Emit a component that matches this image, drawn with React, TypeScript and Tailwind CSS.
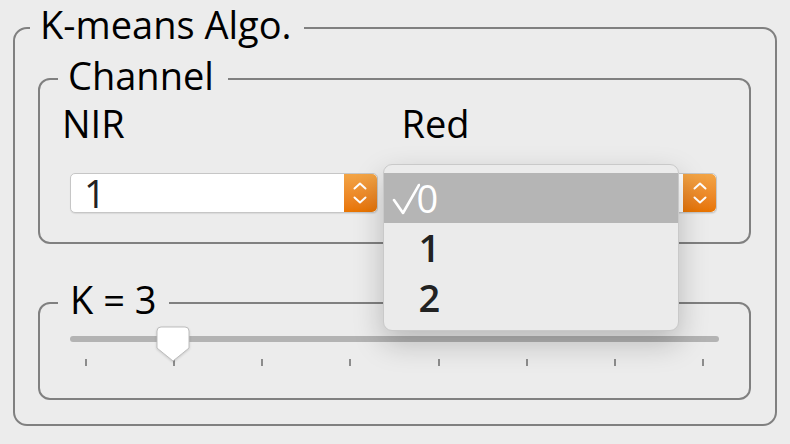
import type { ReactNode } from 'react';

const TICKS = [2, 3, 4, 5, 6, 7, 8, 9];

function Stepper() {
  return (
    <div className="flex h-full w-[33px] shrink-0 flex-col items-center justify-center gap-[6px] rounded-r-[5px] bg-gradient-to-b from-[#f2a445] to-[#e87400]">
      <svg width="14" height="8" viewBox="0 0 14 8">
        <path d="M1.5 6.5 L7 1.5 L12.5 6.5" fill="none" stroke="white" strokeWidth="2" strokeLinecap="round" strokeLinejoin="round" />
      </svg>
      <svg width="14" height="8" viewBox="0 0 14 8">
        <path d="M1.5 1.5 L7 6.5 L12.5 1.5" fill="none" stroke="white" strokeWidth="2" strokeLinecap="round" strokeLinejoin="round" />
      </svg>
    </div>
  );
}

function Select({ value, children }: { value?: string; children?: ReactNode }) {
  return (
    <div className="relative ml-[8px] mt-[31px] flex h-10 items-stretch rounded-[5px] border border-[#c6c6c6] bg-white shadow-[0_1px_1px_rgba(0,0,0,0.08)]">
      <div className="flex flex-1 items-center pl-[13px] text-[38px] leading-[38px] text-[#222]">{value}</div>
      <Stepper />
      {children}
    </div>
  );
}

function PopupMenu() {
  return (
    <div className="absolute left-[-28px] top-[-10px] z-10 flex h-[167px] w-[296px] flex-col rounded-[9px] border border-[#c9c9c9] bg-[#ebebeb] pt-[8px] shadow-[0_12px_30px_rgba(0,0,0,0.22)]">
      <div className="flex h-[50px] items-center bg-[#b5b5b5] pl-[8px] text-white">
        <svg width="28" height="34" viewBox="0 0 28 34" className="mt-[2px]">
          <path d="M2 18 L11 31 L27 3" fill="none" stroke="white" strokeWidth="2.6" strokeLinecap="round" strokeLinejoin="round" />
        </svg>
        <span className="ml-[-3px] text-[38px] leading-[38px]">0</span>
      </div>
      <div className="flex h-[50px] items-center pb-[3px] pl-[35px] text-[38px] font-semibold leading-[38px] text-[#222]">1</div>
      <div className="flex h-[50px] items-center pb-[3px] pl-[35px] text-[38px] font-semibold leading-[38px] text-[#222]">2</div>
    </div>
  );
}

function Thumb() {
  return (
    <svg width="34" height="37" viewBox="0 0 34 37" className="absolute left-[86px] top-[-1px] drop-shadow-[0_1px_1px_rgba(0,0,0,0.15)]">
      <path d="M5 1 H29 Q33 1 33 5 V22 L17 35 L1 22 V5 Q1 1 5 1 Z" fill="white" stroke="#bdbdbd" strokeWidth="1" />
    </svg>
  );
}

export default function App() {
  return (
    <div
      className="h-[444px] w-[790px] overflow-hidden bg-[#ececec] px-[13px] pt-[2px] text-black"
      style={{ fontFamily: '"Open Sans", "DejaVu Sans", sans-serif' }}
    >
      <fieldset className="h-[424px] rounded-[14px] border-2 border-[#808080]">
        <legend className="ml-[15px] pb-[7px] pl-[10px] pr-3 text-[38px] font-medium leading-[44px]">K-means Algo.</legend>

        <div className="pb-[25px] pl-[23px] pr-[24px]">
          <fieldset className="rounded-[12px] border-2 border-[#808080]">
            <legend className="ml-[18px] pb-[7px] pl-[10px] pr-[14px] text-[38px] font-medium leading-[44px]">Channel</legend>
            <div className="grid grid-cols-2 gap-x-[24px] pb-[29px] pl-[22px] pr-[32px]">
              <div className="flex flex-col">
                <span className="text-[38px] font-medium leading-[38px]">NIR</span>
                <Select value="1" />
              </div>
              <div className="flex flex-col">
                <span className="text-[38px] font-medium leading-[38px]">Red</span>
                <Select>
                  <PopupMenu />
                </Select>
              </div>
            </div>
          </fieldset>

          <fieldset className="mt-[33px] rounded-[12px] border-2 border-[#808080]">
            <legend className="ml-[18px] pb-[7px] pl-[12px] pr-[13px] text-[38px] font-medium leading-[44px]">K = 3</legend>
            <div className="pb-[32px] px-[30px]">
              <div className="relative mt-[-1px] h-[32px]">
                <div className="absolute inset-x-0 top-[9px] h-[6px] rounded-full bg-[#b3b3b3]" />
                <Thumb />
              </div>
              <div className="flex h-[7px] justify-between px-[15px]">
                {TICKS.map((t) => (
                  <span key={t} className="h-full w-[2px] bg-[#8c8c8c]" />
                ))}
              </div>
            </div>
          </fieldset>
        </div>
      </fieldset>
    </div>
  );
}
